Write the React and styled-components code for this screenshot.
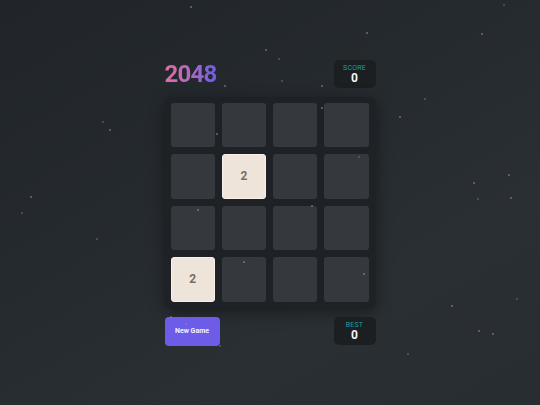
import React from 'react';
import styled, { createGlobalStyle } from 'styled-components';

const GlobalStyle = createGlobalStyle`
  html, body {
    margin: 0;
    padding: 0;
    height: 100%;
  }
  body {
    font-family: Roboto, "Liberation Sans", Arial, sans-serif;
    background: #262b2f;
  }
  #root {
    height: 100%;
  }
`;

const Page = styled.div`
  position: relative;
  width: 100%;
  height: 100vh;
  overflow: hidden;
  display: flex;
  align-items: center;
  justify-content: center;
  background: linear-gradient(150deg, #212529 0%, #252a2e 40%, #2a2f33 70%, #282d31 100%);
`;

const Game = styled.div`
  width: 211px;
  display: flex;
  flex-direction: column;
  gap: 9px;
`;

const Row = styled.div`
  display: flex;
  align-items: center;
  justify-content: space-between;
`;

const Title = styled.h1`
  margin: 0;
  font-size: 24px;
  font-weight: 700;
  line-height: 28px;
  letter-spacing: -0.8px;
  background: linear-gradient(90deg, #e66da2 0%, #a968c9 55%, #6c5ce7 100%);
  -webkit-background-clip: text;
  background-clip: text;
  color: transparent;
`;

const StatBox = styled.div`
  width: 42px;
  height: 28px;
  box-sizing: border-box;
  padding-top: 4px;
  border-radius: 5px;
  background: #1b1f22;
  display: flex;
  flex-direction: column;
  align-items: center;
`;

const StatLabel = styled.span`
  font-size: 7px;
  line-height: 8px;
  letter-spacing: 0.2px;
  color: #1e9f98;
  text-transform: uppercase;
`;

const StatValue = styled.span`
  font-size: 12px;
  line-height: 13px;
  font-weight: 700;
  color: #f4f4f4;
`;

const Board = styled.div`
  width: 211px;
  height: 211px;
  box-sizing: border-box;
  padding: 6px 7px 6px 6px;
  border-radius: 7px;
  background: #1e2226;
  box-shadow: 0 4px 16px rgba(0, 0, 0, 0.4);
  display: grid;
  grid-template-columns: repeat(4, 1fr);
  grid-template-rows: repeat(4, 1fr);
  gap: 7px;
`;

const Tile = styled.div`
  border-radius: 3px;
  background: ${p => (p.value ? '#eee4da' : '#35393d')};
  border: ${p => (p.value ? '1px solid #f7f1ea' : 'none')};
  color: #776e65;
  font-size: 12px;
  font-weight: 700;
  display: flex;
  align-items: center;
  justify-content: center;
`;

const NewGameButton = styled.button`
  width: 55px;
  height: 29px;
  padding: 0;
  border: none;
  border-radius: 4px;
  background: #6c5ce7;
  color: #f4f2ff;
  font-family: Roboto, "Liberation Sans", Arial, sans-serif;
  font-size: 7px;
  font-weight: 700;
  cursor: pointer;
`;

const Stars = styled.div`
  position: absolute;
  inset: 0;
  pointer-events: none;
`;

const Star = styled.span`
  position: absolute;
  width: 2px;
  height: 2px;
  border-radius: 50%;
  background: #b0708f;
  opacity: ${p => p.dim || 0.75};
`;

const starField = [
  [503, 4], [366, 32], [481, 33], [278, 58], [265, 49], [190, 6],
  [281, 80], [321, 85], [224, 85], [424, 98], [321, 107], [399, 116],
  [102, 121], [109, 129], [216, 133], [358, 156], [508, 174], [473, 182],
  [477, 198], [510, 197], [30, 196], [21, 212], [197, 209], [311, 205],
  [96, 238], [243, 261], [363, 273], [516, 298], [451, 305], [185, 323],
  [219, 345], [478, 330], [492, 333], [407, 353], [170, 316],
];

const grid = [
  [0, 0, 0, 0],
  [0, 2, 0, 0],
  [0, 0, 0, 0],
  [2, 0, 0, 0],
];

export default function App() {
  return (
    <>
      <GlobalStyle />
      <Page>
        <Game>
          <Row>
            <Title>2048</Title>
            <StatBox>
              <StatLabel>Score</StatLabel>
              <StatValue>0</StatValue>
            </StatBox>
          </Row>
          <Board>
            {grid.flat().map((v, i) => (
              <Tile key={i} value={v}>{v || ''}</Tile>
            ))}
          </Board>
          <Row>
            <NewGameButton>New Game</NewGameButton>
            <StatBox>
              <StatLabel>Best</StatLabel>
              <StatValue>0</StatValue>
            </StatBox>
          </Row>
        </Game>
        <Stars>
          {starField.map(([x, y], i) => (
            <Star key={i} style={{ left: x, top: y }} dim={i % 3 === 0 ? 0.5 : 0.75} />
          ))}
        </Stars>
      </Page>
    </>
  );
}
